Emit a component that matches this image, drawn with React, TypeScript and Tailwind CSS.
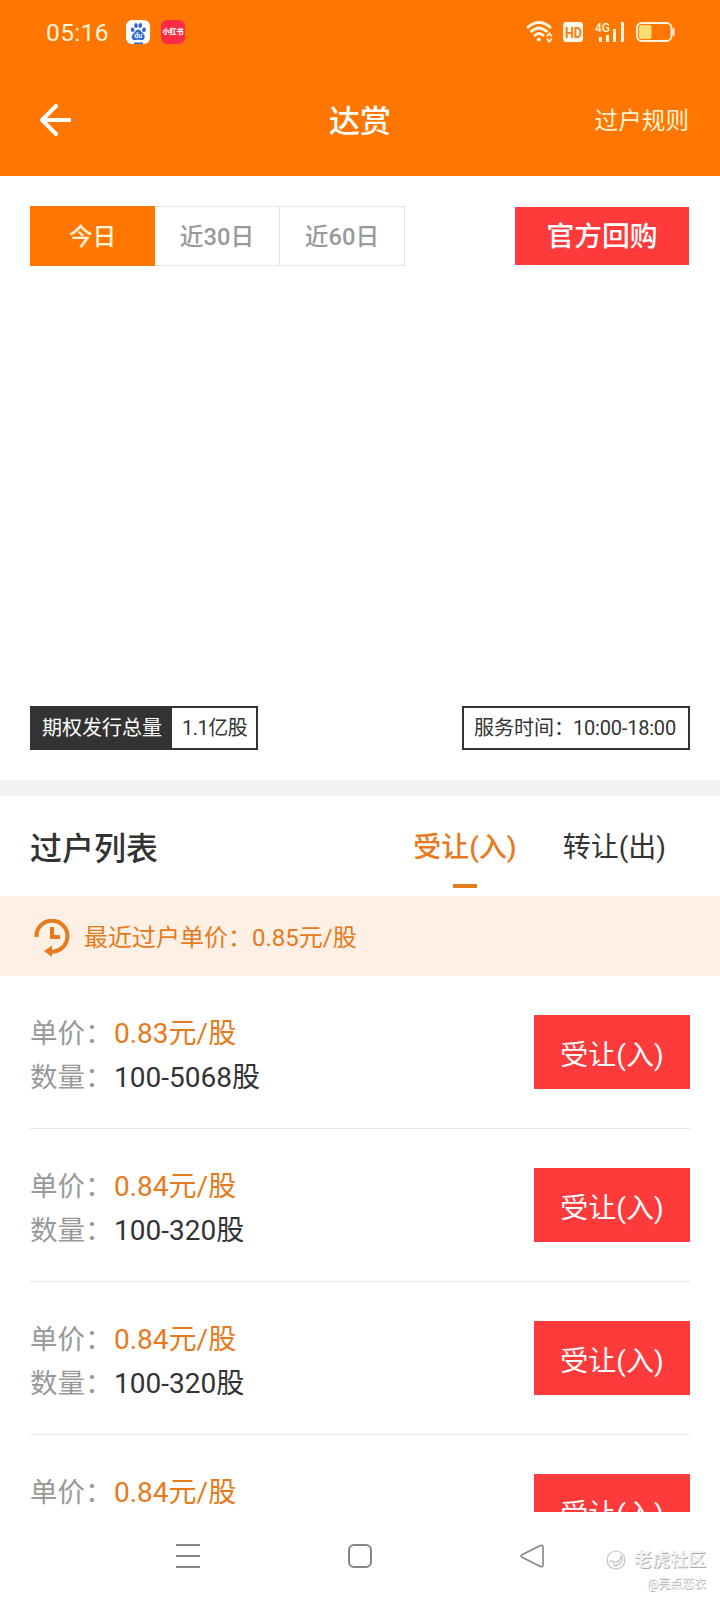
const rows = [
  { price: "0.83元/股", amount: "100-5068股" },
  { price: "0.84元/股", amount: "100-320股" },
  { price: "0.84元/股", amount: "100-320股" },
  { price: "0.84元/股", amount: "100-320股" },
];

function StatusBar() {
  return (
    <div className="flex h-16 items-center pr-[45px] pl-[46px] text-[#fff4dc]">
      <span className="w-[80px] pt-0.5 text-[24.5px] leading-[30px] tracking-[0.4px]">05:16</span>
      <svg className="size-6" viewBox="0 0 24 24">
        <rect width="24" height="24" rx="6" fill="#fff" />
        <g fill="#2f66d8">
          <ellipse cx="6.6" cy="9.8" rx="1.8" ry="2.3" transform="rotate(-15 6.6 9.8)" />
          <ellipse cx="10" cy="5.5" rx="1.8" ry="2.5" />
          <ellipse cx="14.3" cy="5.5" rx="1.8" ry="2.5" transform="rotate(10 14.3 5.5)" />
          <ellipse cx="18" cy="9.7" rx="1.8" ry="2.3" transform="rotate(15 18 9.7)" />
          <path d="M12.2 9.5c1.8 0 2.6 1.7 4 3.2 1.5 1.5 3 2.6 2.4 5-.5 2-2.2 2.6-4 2.2-1.6-.3-3.2-.3-4.800 0-1.800.4-3.600-.2-4-2.200-.500-2.400 1-3.500 2.500-5 1.400-1.500 2.100-3.200 3.900-3.200Z" />
          <path d="M8 22.500h9V24H8Z" />
        </g>
        <text x="12.200" y="18.300" textAnchor="middle" fontSize="7" fontWeight="700" fill="#fff">du</text>
      </svg>
      <div className="ml-[11px] flex size-6 items-center justify-center rounded-[6px] bg-[#fb2b45]">
        <span className="text-[7px] leading-none font-black whitespace-nowrap text-white">小红书</span>
      </div>
      <div className="grow" />
      <svg className="h-[22px] w-[27px]" viewBox="0 0 27 22" fill="none" stroke="currentColor">
        <path d="M1 7Q13 -4 25 7" strokeWidth="2.800" />
        <path d="M4.500 11Q13 2.800 21.500 11" strokeWidth="2.800" />
        <path d="M8 15Q13 10 18 15" strokeWidth="2.800" />
        <circle cx="12.800" cy="18.500" r="2.100" fill="currentColor" stroke="none" />
        <path d="m20.800 15.300 2.500-3 2.500 3m-5 2.400 2.500 3 2.500-3" strokeWidth="1.800" />
      </svg>
      <div className="ml-[10px] flex h-5 w-5 items-center justify-center rounded-[3px] bg-[#fff8ea] pt-px text-[14px] leading-none font-bold text-[#f57d12]">
        <span className="scale-x-90">HD</span>
      </div>
      <svg className="ml-[12px] h-[22px] w-[30px]" viewBox="0 0 30 22" fill="currentColor">
        <text x="0" y="11" fontSize="12" fontWeight="500">4G</text>
        <rect x="4" y="16" width="3" height="5" />
        <rect x="11" y="14" width="3" height="7" />
        <rect x="18" y="8" width="3" height="13" />
        <rect x="26" y="1" width="3" height="20" />
      </svg>
      <svg className="ml-[11px] h-5 w-[39px]" viewBox="0 0 39 20" fill="none">
        <rect x="1" y="1" width="34.500" height="18" rx="5" stroke="currentColor" strokeWidth="2" />
        <rect x="3" y="3" width="12.500" height="14" rx="3" fill="#ffdb70" />
        <path d="M37.500 7v6" stroke="currentColor" strokeWidth="2" strokeLinecap="round" />
      </svg>
    </div>
  );
}

function ListRow({ price, amount }: { price: string; amount: string }) {
  return (
    <div className="flex h-[153px] shrink-0 items-start justify-between border-b border-[#e6e6e6] pt-[39px] text-[28px]">
      <div className="-mt-[3px] leading-[44px]">
        <div className="flex">
          <span className="w-[84px] text-[27.5px] text-[#999]">单价：</span>
          <span className="text-[#e67a1c]">{price}</span>
        </div>
        <div className="flex">
          <span className="w-[84px] text-[27.5px] text-[#999]">数量：</span>
          <span className="text-[#333]">{amount}</span>
        </div>
      </div>
      <button className="flex h-[74px] w-[156px] items-center justify-center bg-[#ff3a3a] pt-2 text-white">受让(入)</button>
    </div>
  );
}

export default function App() {
  return (
    <div className="flex h-[1600px] w-[720px] flex-col overflow-hidden bg-white font-[Roboto,'Noto_Sans_CJK_SC',sans-serif] text-[#333]">
      <header className="h-[176px] shrink-0 bg-[#ff7700] text-white">
        <StatusBar />
        <div className="grid h-[112px] grid-cols-3 items-center px-[31px]">
          <svg className="ml-2 h-8 w-8" viewBox="0 0 32 32" fill="none" stroke="#fff" strokeWidth="4">
            <path d="M33 16H3" />
            <path d="M17 2 3 16l14 14" strokeLinecap="round" strokeLinejoin="round" />
          </svg>
          <h1 className="pt-1 text-center text-[31px] font-medium">达赏</h1>
          <span className="pt-1 text-right text-[23.6px] text-[#fff3d6]">过户规则</span>
        </div>
      </header>

      <section className="flex h-[604px] shrink-0 flex-col justify-between px-[30px] py-[30px]">
        <div className="flex items-center justify-between">
          <div className="flex h-[60px] text-[23.7px] font-medium text-[#999]">
            <button className="w-[125px] bg-[#ff7700] pt-1 text-[#fff3d6]">今日</button>
            <button className="w-[125px] border border-l-0 border-[#e5e5e5] pt-1">近30日</button>
            <button className="w-[125px] border border-l-0 border-[#e5e5e5] pt-1">近60日</button>
          </div>
          <button className="mr-px h-[58px] w-[174px] bg-[#ff3a3a] pt-0.5 text-[27.8px] font-medium text-white">官方回购</button>
        </div>
        <div className="flex justify-between text-[20px]">
          <div className="flex h-11 w-[228px] border-2 border-[#333]">
            <span className="flex w-[140px] items-center bg-[#333] pl-[10px] text-white">期权发行总量</span>
            <span className="flex grow items-center pl-[10px] tracking-[-0.5px]">1.1亿股</span>
          </div>
          <div className="flex h-11 w-[228px] items-center border-2 border-[#333] pl-[10px]">
            <span>服务时间：</span>
            <span className="-ml-px tracking-[-0.2px]">10:00-18:00</span>
          </div>
        </div>
      </section>

      <div className="h-4 shrink-0 bg-[#f2f2f2]" />

      <div className="flex h-[100px] shrink-0 justify-between pr-[54px] pl-[30px]">
        <h2 className="pt-[29px] text-[32px] leading-[48px] font-medium">过户列表</h2>
        <div className="flex gap-[46px] pt-[29px] text-[28px] leading-[46px]">
          <div className="flex flex-col items-center font-medium text-[#e67a1c]">
            受让(入)
            <span className="mt-[13px] h-1 w-6 bg-[#e67a1c]" />
          </div>
          <div>转让(出)</div>
        </div>
      </div>

      <div className="flex h-20 shrink-0 items-center bg-[#fff0e5] pt-1 pl-[34px] text-[24px] text-[#e67a1c]">
        <svg className="mr-[13px] h-[38px] w-[37px] shrink-0" viewBox="0 0 37 38" fill="none" stroke="currentColor">
          <path d="M2.500 18A15.500 15.500 0 1 1 16 32.500" strokeWidth="4" />
          <path d="m10 32 8-5.500V38Z" fill="currentColor" stroke="none" />
          <path d="M18 8v10h8" strokeWidth="4" />
        </svg>
        最近过户单价：0.85元/股
      </div>

      <main className="flex h-[536px] shrink-0 flex-col overflow-hidden px-[30px]">
        {rows.map((row, i) => (
          <ListRow key={i} price={row.price} amount={row.amount} />
        ))}
      </main>

      <nav className="flex h-[88px] shrink-0 items-center pl-[176px] text-[#858585]">
        <svg className="h-6 w-6" viewBox="0 0 24 24" stroke="currentColor" strokeWidth="2">
          <path d="M0 1h24M0 12h24M0 23h24" />
        </svg>
        <svg className="ml-[148px] h-6 w-6" viewBox="0 0 24 24" fill="none" stroke="currentColor" strokeWidth="2">
          <rect x="1" y="1" width="22" height="22" rx="5" />
        </svg>
        <svg className="ml-[148px] h-6 w-6" viewBox="0 0 24 24" fill="none" stroke="currentColor" strokeWidth="1.600">
          <path d="M20.500 1.500 2 10.800q-2 1.200 0 2.400l18.500 9.300q2.500.8 2.500-1.500V3q0-2.300-2.500-1.500Z" />
        </svg>
        <div className="ml-[62px] flex flex-col items-end self-stretch pt-[36px] text-[#f2f2f4] [text-shadow:0.7px_0.7px_0.5px_#aaa]">
          <div className="flex items-center gap-2">
            <svg className="h-5 w-5" viewBox="0 0 20 20" fill="none" stroke="#c4c4c8" strokeWidth="1.200">
              <circle cx="10" cy="10" r="9" />
              <path d="M14.500 4.500q1.500 3-.5 5.500-2 2-4.500 2.500L6 11l-3 1m5 4q4 0 7-3.500 2-2.500 1.500-6M7 12.500l1.500 3" />
            </svg>
            <span className="text-[18px] leading-[24px] font-bold">老虎社区</span>
          </div>
          <span className="text-[12px] leading-[24px]">@亮点恋衣</span>
        </div>
      </nav>
    </div>
  );
}
